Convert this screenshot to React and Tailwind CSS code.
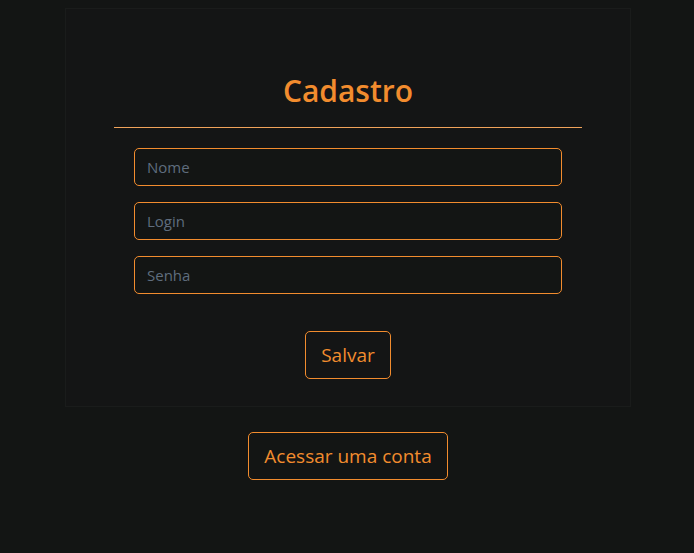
export default function App() {
  const font = { fontFamily: '"Open Sans", "Noto Sans", sans-serif' };
  return (
    <div className="min-h-[553px] w-full bg-[#131514] flex flex-col items-center pt-2 pl-[2px]" style={font}>
      <div className="w-[566px] border border-[#1a1c1b] bg-[#141515] px-12 pt-[64px] pb-[27px] flex flex-col items-center">
        <h1 className="text-[30px] leading-[36px] font-semibold text-[#f28c2e]">Cadastro</h1>
        <div className="w-full h-px bg-[#f0a35a] mt-[18px]" />
        <div className="w-full px-5 pt-5 flex flex-col gap-4">
          {["Nome", "Login", "Senha"].map((p) => (
            <input
              key={p}
              placeholder={p}
              type={p === "Senha" ? "password" : "text"}
              className="h-[38px] w-full rounded-[5px] border border-[#f28c2e] bg-[#131514] px-[12px] text-[15px] text-[#cfd4da] placeholder:text-[#5f6d7e] outline-none"
            />
          ))}
        </div>
        <button className="mt-[37px] h-[48px] px-[15px] rounded-[5px] border border-[#f28c2e] text-[19px] text-[#f28c2e] bg-transparent">
          Salvar
        </button>
      </div>
      <button className="mt-[25px] h-[48px] px-[15px] rounded-[5px] border border-[#f28c2e] text-[19px] text-[#f28c2e] bg-transparent">
        Acessar uma conta
      </button>
    </div>
  );
}
